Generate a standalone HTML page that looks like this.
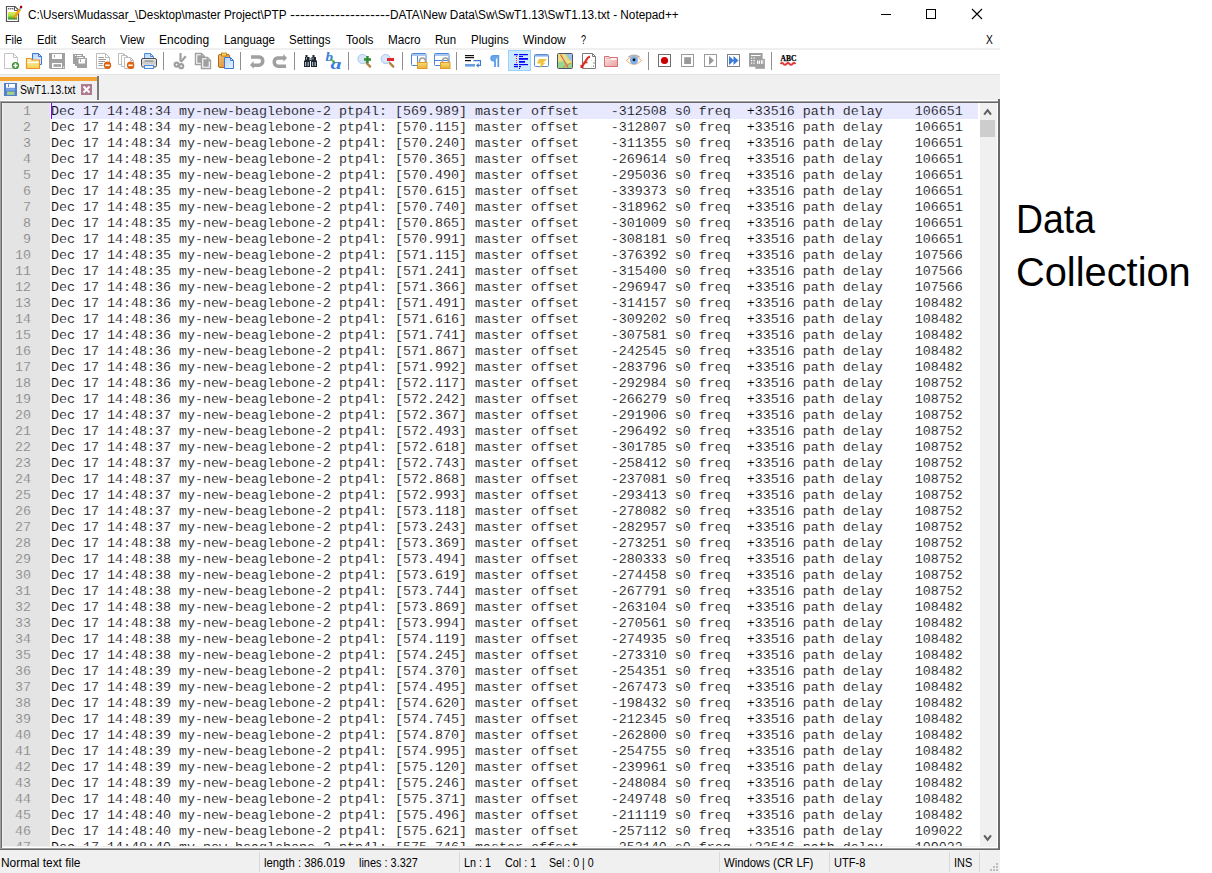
<!DOCTYPE html>
<html><head><meta charset="utf-8"><style>
html,body{margin:0;padding:0}
body{width:1212px;height:873px;position:relative;overflow:hidden;background:#fff;font-family:"Liberation Sans", sans-serif}
.t{position:absolute;white-space:pre;transform-origin:0 0}
.r{position:absolute}
#ed{position:absolute;left:3px;top:103px;width:977px;height:743px;overflow:hidden;background:#fff}
#margin{position:absolute;left:0;top:0;width:47px;height:743px;background:#e4e4e4}
#curline{position:absolute;left:49px;top:0;width:926px;height:16px;background:#e8e8ff}
#caret{position:absolute;left:48px;top:0;width:1px;height:16px;background:#8000ff}
#nums .nm{position:absolute;left:0;width:28px;text-align:right;font-family:"Liberation Mono", monospace;font-size:13.3333px;line-height:16px;color:#808080;white-space:pre;transform:scaleX(1.00000);transform-origin:28px 0;-webkit-text-stroke:0.18px #e4e4e4}
#txt .ln{position:absolute;left:48px;font-family:"Liberation Mono", monospace;font-size:13.3333px;line-height:16px;color:#000;white-space:pre;transform:scaleX(1.00000);transform-origin:0 0;-webkit-text-stroke:0.18px #fff}
</style></head>
<body>

<!-- menu / toolbar separators -->
<div class="r" style="left:0;top:48px;width:1000px;height:2px;background:#f0f0f0"></div>
<div class="r" style="left:0;top:74px;width:1000px;height:1px;background:#e3e3e3"></div>
<div class="r" style="left:0;top:75px;width:1000px;height:25px;background:#f0f0f0"></div>
<div class="r" style="left:0;top:77px;width:97px;height:4px;background:#f4a536"></div>
<div class="r" style="left:97px;top:76px;width:2px;height:24px;background:#7a7a7a"></div>
<!-- editor frame -->
<div class="r" style="left:0;top:100px;width:998px;height:1px;background:#fff"></div>
<div class="r" style="left:0;top:101px;width:998px;height:1px;background:#a0a0a0"></div>
<div class="r" style="left:0;top:102px;width:998px;height:1px;background:#696969"></div>
<div class="r" style="left:0;top:101px;width:1px;height:749px;background:#a0a0a0"></div>
<div class="r" style="left:1px;top:102px;width:1px;height:748px;background:#696969"></div>
<div class="r" style="left:2px;top:103px;width:996px;height:744px;background:#f0f0f0"></div>
<div class="r" style="left:2px;top:847px;width:996px;height:1px;background:#fff"></div>
<div class="r" style="left:0;top:848px;width:1000px;height:1px;background:#a0a0a0"></div>
<div class="r" style="left:0;top:849px;width:1000px;height:1px;background:#696969"></div>
<div class="r" style="left:997px;top:103px;width:1px;height:745px;background:#fff"></div>
<div class="r" style="left:998px;top:99px;width:2px;height:751px;background:#696969"></div>
<!-- scrollbar -->
<div class="r" style="left:980px;top:103px;width:17px;height:743px;background:#f0f0f0"></div>
<div class="r" style="left:980px;top:120px;width:15px;height:17px;background:#cdcdcd"></div>
<!-- status bar -->
<div class="r" style="left:0;top:850px;width:1000px;height:23px;background:#f0f0f0"></div>
<div class="r" style="left:259px;top:852px;width:1px;height:20px;background:#d9d9d9"></div><div class="r" style="left:459px;top:852px;width:1px;height:20px;background:#d9d9d9"></div><div class="r" style="left:719px;top:852px;width:1px;height:20px;background:#d9d9d9"></div><div class="r" style="left:829px;top:852px;width:1px;height:20px;background:#d9d9d9"></div><div class="r" style="left:949px;top:852px;width:1px;height:20px;background:#d9d9d9"></div><div class="r" style="left:979px;top:852px;width:1px;height:20px;background:#d9d9d9"></div><div class="r" style="left:978px;top:103px;width:2px;height:743px;background:#fff"></div>
<div id="ed">
  <div id="margin"></div>
  <div id="curline"></div>
  <div id="nums"><div class="nm" style="top:1px">1</div><div class="nm" style="top:17px">2</div><div class="nm" style="top:33px">3</div><div class="nm" style="top:49px">4</div><div class="nm" style="top:65px">5</div><div class="nm" style="top:81px">6</div><div class="nm" style="top:97px">7</div><div class="nm" style="top:113px">8</div><div class="nm" style="top:129px">9</div><div class="nm" style="top:145px">10</div><div class="nm" style="top:161px">11</div><div class="nm" style="top:177px">12</div><div class="nm" style="top:193px">13</div><div class="nm" style="top:209px">14</div><div class="nm" style="top:225px">15</div><div class="nm" style="top:241px">16</div><div class="nm" style="top:257px">17</div><div class="nm" style="top:273px">18</div><div class="nm" style="top:289px">19</div><div class="nm" style="top:305px">20</div><div class="nm" style="top:321px">21</div><div class="nm" style="top:337px">22</div><div class="nm" style="top:353px">23</div><div class="nm" style="top:369px">24</div><div class="nm" style="top:385px">25</div><div class="nm" style="top:401px">26</div><div class="nm" style="top:417px">27</div><div class="nm" style="top:433px">28</div><div class="nm" style="top:449px">29</div><div class="nm" style="top:465px">30</div><div class="nm" style="top:481px">31</div><div class="nm" style="top:497px">32</div><div class="nm" style="top:513px">33</div><div class="nm" style="top:529px">34</div><div class="nm" style="top:545px">35</div><div class="nm" style="top:561px">36</div><div class="nm" style="top:577px">37</div><div class="nm" style="top:593px">38</div><div class="nm" style="top:609px">39</div><div class="nm" style="top:625px">40</div><div class="nm" style="top:641px">41</div><div class="nm" style="top:657px">42</div><div class="nm" style="top:673px">43</div><div class="nm" style="top:689px">44</div><div class="nm" style="top:705px">45</div><div class="nm" style="top:721px">46</div><div class="nm" style="top:737px">47</div></div>
  <div id="txt"><div class="ln" style="top:1px;-webkit-text-stroke-color:#e8e8ff">Dec 17 14:48:34 my-new-beaglebone-2 ptp4l: [569.989] master offset    -312508 s0 freq  +33516 path delay    106651</div><div class="ln" style="top:17px">Dec 17 14:48:34 my-new-beaglebone-2 ptp4l: [570.115] master offset    -312807 s0 freq  +33516 path delay    106651</div><div class="ln" style="top:33px">Dec 17 14:48:34 my-new-beaglebone-2 ptp4l: [570.240] master offset    -311355 s0 freq  +33516 path delay    106651</div><div class="ln" style="top:49px">Dec 17 14:48:35 my-new-beaglebone-2 ptp4l: [570.365] master offset    -269614 s0 freq  +33516 path delay    106651</div><div class="ln" style="top:65px">Dec 17 14:48:35 my-new-beaglebone-2 ptp4l: [570.490] master offset    -295036 s0 freq  +33516 path delay    106651</div><div class="ln" style="top:81px">Dec 17 14:48:35 my-new-beaglebone-2 ptp4l: [570.615] master offset    -339373 s0 freq  +33516 path delay    106651</div><div class="ln" style="top:97px">Dec 17 14:48:35 my-new-beaglebone-2 ptp4l: [570.740] master offset    -318962 s0 freq  +33516 path delay    106651</div><div class="ln" style="top:113px">Dec 17 14:48:35 my-new-beaglebone-2 ptp4l: [570.865] master offset    -301009 s0 freq  +33516 path delay    106651</div><div class="ln" style="top:129px">Dec 17 14:48:35 my-new-beaglebone-2 ptp4l: [570.991] master offset    -308181 s0 freq  +33516 path delay    106651</div><div class="ln" style="top:145px">Dec 17 14:48:35 my-new-beaglebone-2 ptp4l: [571.115] master offset    -376392 s0 freq  +33516 path delay    107566</div><div class="ln" style="top:161px">Dec 17 14:48:35 my-new-beaglebone-2 ptp4l: [571.241] master offset    -315400 s0 freq  +33516 path delay    107566</div><div class="ln" style="top:177px">Dec 17 14:48:36 my-new-beaglebone-2 ptp4l: [571.366] master offset    -296947 s0 freq  +33516 path delay    107566</div><div class="ln" style="top:193px">Dec 17 14:48:36 my-new-beaglebone-2 ptp4l: [571.491] master offset    -314157 s0 freq  +33516 path delay    108482</div><div class="ln" style="top:209px">Dec 17 14:48:36 my-new-beaglebone-2 ptp4l: [571.616] master offset    -309202 s0 freq  +33516 path delay    108482</div><div class="ln" style="top:225px">Dec 17 14:48:36 my-new-beaglebone-2 ptp4l: [571.741] master offset    -307581 s0 freq  +33516 path delay    108482</div><div class="ln" style="top:241px">Dec 17 14:48:36 my-new-beaglebone-2 ptp4l: [571.867] master offset    -242545 s0 freq  +33516 path delay    108482</div><div class="ln" style="top:257px">Dec 17 14:48:36 my-new-beaglebone-2 ptp4l: [571.992] master offset    -283796 s0 freq  +33516 path delay    108482</div><div class="ln" style="top:273px">Dec 17 14:48:36 my-new-beaglebone-2 ptp4l: [572.117] master offset    -292984 s0 freq  +33516 path delay    108752</div><div class="ln" style="top:289px">Dec 17 14:48:36 my-new-beaglebone-2 ptp4l: [572.242] master offset    -266279 s0 freq  +33516 path delay    108752</div><div class="ln" style="top:305px">Dec 17 14:48:37 my-new-beaglebone-2 ptp4l: [572.367] master offset    -291906 s0 freq  +33516 path delay    108752</div><div class="ln" style="top:321px">Dec 17 14:48:37 my-new-beaglebone-2 ptp4l: [572.493] master offset    -296492 s0 freq  +33516 path delay    108752</div><div class="ln" style="top:337px">Dec 17 14:48:37 my-new-beaglebone-2 ptp4l: [572.618] master offset    -301785 s0 freq  +33516 path delay    108752</div><div class="ln" style="top:353px">Dec 17 14:48:37 my-new-beaglebone-2 ptp4l: [572.743] master offset    -258412 s0 freq  +33516 path delay    108752</div><div class="ln" style="top:369px">Dec 17 14:48:37 my-new-beaglebone-2 ptp4l: [572.868] master offset    -237081 s0 freq  +33516 path delay    108752</div><div class="ln" style="top:385px">Dec 17 14:48:37 my-new-beaglebone-2 ptp4l: [572.993] master offset    -293413 s0 freq  +33516 path delay    108752</div><div class="ln" style="top:401px">Dec 17 14:48:37 my-new-beaglebone-2 ptp4l: [573.118] master offset    -278082 s0 freq  +33516 path delay    108752</div><div class="ln" style="top:417px">Dec 17 14:48:37 my-new-beaglebone-2 ptp4l: [573.243] master offset    -282957 s0 freq  +33516 path delay    108752</div><div class="ln" style="top:433px">Dec 17 14:48:38 my-new-beaglebone-2 ptp4l: [573.369] master offset    -273251 s0 freq  +33516 path delay    108752</div><div class="ln" style="top:449px">Dec 17 14:48:38 my-new-beaglebone-2 ptp4l: [573.494] master offset    -280333 s0 freq  +33516 path delay    108752</div><div class="ln" style="top:465px">Dec 17 14:48:38 my-new-beaglebone-2 ptp4l: [573.619] master offset    -274458 s0 freq  +33516 path delay    108752</div><div class="ln" style="top:481px">Dec 17 14:48:38 my-new-beaglebone-2 ptp4l: [573.744] master offset    -267791 s0 freq  +33516 path delay    108752</div><div class="ln" style="top:497px">Dec 17 14:48:38 my-new-beaglebone-2 ptp4l: [573.869] master offset    -263104 s0 freq  +33516 path delay    108482</div><div class="ln" style="top:513px">Dec 17 14:48:38 my-new-beaglebone-2 ptp4l: [573.994] master offset    -270561 s0 freq  +33516 path delay    108482</div><div class="ln" style="top:529px">Dec 17 14:48:38 my-new-beaglebone-2 ptp4l: [574.119] master offset    -274935 s0 freq  +33516 path delay    108482</div><div class="ln" style="top:545px">Dec 17 14:48:38 my-new-beaglebone-2 ptp4l: [574.245] master offset    -273310 s0 freq  +33516 path delay    108482</div><div class="ln" style="top:561px">Dec 17 14:48:39 my-new-beaglebone-2 ptp4l: [574.370] master offset    -254351 s0 freq  +33516 path delay    108482</div><div class="ln" style="top:577px">Dec 17 14:48:39 my-new-beaglebone-2 ptp4l: [574.495] master offset    -267473 s0 freq  +33516 path delay    108482</div><div class="ln" style="top:593px">Dec 17 14:48:39 my-new-beaglebone-2 ptp4l: [574.620] master offset    -198432 s0 freq  +33516 path delay    108482</div><div class="ln" style="top:609px">Dec 17 14:48:39 my-new-beaglebone-2 ptp4l: [574.745] master offset    -212345 s0 freq  +33516 path delay    108482</div><div class="ln" style="top:625px">Dec 17 14:48:39 my-new-beaglebone-2 ptp4l: [574.870] master offset    -262800 s0 freq  +33516 path delay    108482</div><div class="ln" style="top:641px">Dec 17 14:48:39 my-new-beaglebone-2 ptp4l: [574.995] master offset    -254755 s0 freq  +33516 path delay    108482</div><div class="ln" style="top:657px">Dec 17 14:48:39 my-new-beaglebone-2 ptp4l: [575.120] master offset    -239961 s0 freq  +33516 path delay    108482</div><div class="ln" style="top:673px">Dec 17 14:48:39 my-new-beaglebone-2 ptp4l: [575.246] master offset    -248084 s0 freq  +33516 path delay    108482</div><div class="ln" style="top:689px">Dec 17 14:48:40 my-new-beaglebone-2 ptp4l: [575.371] master offset    -249748 s0 freq  +33516 path delay    108482</div><div class="ln" style="top:705px">Dec 17 14:48:40 my-new-beaglebone-2 ptp4l: [575.496] master offset    -211119 s0 freq  +33516 path delay    108482</div><div class="ln" style="top:721px">Dec 17 14:48:40 my-new-beaglebone-2 ptp4l: [575.621] master offset    -257112 s0 freq  +33516 path delay    109022</div><div class="ln" style="top:737px">Dec 17 14:48:40 my-new-beaglebone-2 ptp4l: [575.746] master offset    -252140 s0 freq  +33516 path delay    109022</div></div>
  <div id="caret"></div>
</div>
<svg class="r" style="left:0;top:0" width="1000" height="873" viewBox="0 0 1000 873"><defs><linearGradient id="gNP" x1="0" y1="0" x2="0" y2="1"><stop offset="0" stop-color="#e8e860"/><stop offset=".5" stop-color="#a8e040"/><stop offset="1" stop-color="#1f8a1f"/></linearGradient><linearGradient id="gFold" x1="0" y1="0" x2="0" y2="1"><stop offset="0" stop-color="#fff4c0"/><stop offset="1" stop-color="#f5d24a"/></linearGradient><linearGradient id="gClip" x1="0" y1="0" x2="1" y2="1"><stop offset="0" stop-color="#f2c27a"/><stop offset="1" stop-color="#d88a30"/></linearGradient><linearGradient id="gBlue" x1="0" y1="0" x2="1" y2="1"><stop offset="0" stop-color="#b8d4fa"/><stop offset="1" stop-color="#e8f2ff"/></linearGradient><linearGradient id="gLock" x1="0" y1="0" x2="0" y2="1"><stop offset="0" stop-color="#f8dc78"/><stop offset="1" stop-color="#e8b030"/></linearGradient><linearGradient id="gPrn" x1="0" y1="0" x2="0" y2="1"><stop offset="0" stop-color="#f4f4f4"/><stop offset=".5" stop-color="#c8c8c8"/><stop offset="1" stop-color="#f0f0f0"/></linearGradient><linearGradient id="gPink" x1="0" y1="0" x2="1" y2="1"><stop offset="0" stop-color="#fbe4e4"/><stop offset="1" stop-color="#e8a0a0"/></linearGradient></defs><path d="M6.5,6.5 H15 L18.5,10 V21.5 H6.5 Z" fill="#fff" stroke="#555" stroke-width="1.2"/><path d="M14.5,6.5 V10.5 H18.5" fill="none" stroke="#555" stroke-width="1"/><g fill="#666"><rect x="8" y="8" width="1.4" height="1.4"/><rect x="10" y="8" width="1.4" height="1.4"/><rect x="12" y="8" width="1.4" height="1.4"/></g><rect x="8" y="12" width="9" height="7.5" fill="url(#gNP)"/><path d="M14,18.5 L20,9" stroke="#f0a010" stroke-width="2.6" stroke-linecap="butt"/><path d="M20,9 L21,7.5" stroke="#8ab0e0" stroke-width="2.4"/><rect x="20" y="5.8" width="2.2" height="2.2" fill="#a00000"/><path d="M13.6,19.2 L14.4,17.6 L15.4,18.3 Z" fill="#333"/><rect x="881" y="14" width="10" height="1" fill="#000"/><rect x="926.5" y="9.5" width="9" height="9" fill="none" stroke="#000" stroke-width="1"/><path d="M972,9 L982,19 M982,9 L972,19" stroke="#000" stroke-width="1.1"/><path d="M4.5,53.5 H13.5 L17.5,57.5 V68.5 H4.5 Z" fill="#fff" stroke="#c4c4c4" stroke-width="1"/><path d="M13.5,53.5 V57.5 H17.5" fill="none" stroke="#c4c4c4" stroke-width="1"/><circle cx="15.5" cy="65.5" r="3.6" fill="#3d8f2e"/><path d="M15.5,63.3 V67.7 M13.3,65.5 H17.7" stroke="#fff" stroke-width="1.6"/><path d="M32.5,53.5 H38.5 L41.5,56.5 V64.5 H32.5 Z" fill="url(#gBlue)" stroke="#3b78d8" stroke-width="1"/><path d="M38.5,53.5 V56.5 H41.5" fill="none" stroke="#3b78d8" stroke-width="1"/><path d="M26.5,58.5 H31 L32,60 H39.5 V68.5 H26.5 Z" fill="url(#gFold)" stroke="#e8902a" stroke-width="1.2"/><path d="M27,62.5 H39" stroke="#fff" stroke-width="1"/><path d="M49,53 H65 V69 H50 L49,68 Z" fill="#a0a0a0"/><rect x="52" y="54" width="10" height="5" fill="#fff"/><rect x="54" y="55" width="1" height="2.5" fill="#a0a0a0"/><rect x="52" y="63" width="10" height="5" fill="#fff"/><rect x="53.5" y="64.2" width="7.5" height="2.6" fill="#a0a0a0"/><rect x="63" y="66.6" width="1.2" height="1.2" fill="#fff"/><rect x="73" y="54" width="10" height="10" fill="#a0a0a0"/><rect x="75" y="55" width="1.3" height="1.3" fill="#fff"/><rect x="77" y="55" width="4.5" height="1.3" fill="#fff"/><rect x="75" y="56" width="10" height="10" fill="#a0a0a0"/><rect x="77" y="57" width="1.3" height="1.3" fill="#fff"/><rect x="79" y="57" width="4.5" height="1.3" fill="#fff"/><rect x="77" y="58" width="10" height="10" fill="#a0a0a0"/><rect x="79" y="59" width="1.3" height="1.3" fill="#fff"/><rect x="81" y="59" width="4.5" height="1.3" fill="#fff"/><rect x="78.5" y="59.5" width="6.5" height="4" fill="#fff"/><rect x="80" y="59.5" width="1" height="2.5" fill="#a0a0a0"/><path d="M96.5,53.5 H105.5 L109.5,57.5 V68.5 H96.5 Z" fill="#fff" stroke="#bdbdbd" stroke-width="1"/><path d="M105.5,53.5 V57.5 H109.5" fill="none" stroke="#bdbdbd" stroke-width="1"/><g stroke="#9a9a9a" stroke-width="1"><path d="M98.5,57.5 H104"/><path d="M98.5,59.5 H106"/><path d="M98.5,61.5 H105"/><path d="M98.5,63.5 H103"/><path d="M98.5,65.5 H103"/></g><circle cx="107.5" cy="65.3" r="3.7" fill="#e0600a"/><path d="M105.3,65.3 H109.7" stroke="#fff" stroke-width="1.6"/><path d="M118.5,53.5 H123.5 L126.5,56.5 V64.5 H118.5 Z" fill="#fff" stroke="#bdbdbd" stroke-width="1"/><path d="M123.5,53.5 V56.5 H126.5" fill="none" stroke="#bdbdbd" stroke-width="1"/><path d="M121.5,55.5 H126.5 L129.5,58.5 V66.5 H121.5 Z" fill="#fff" stroke="#bdbdbd" stroke-width="1"/><path d="M126.5,55.5 V58.5 H129.5" fill="none" stroke="#bdbdbd" stroke-width="1"/><path d="M124.5,57.5 H130.5 L133.5,60.5 V68.5 H124.5 Z" fill="#fff" stroke="#bdbdbd" stroke-width="1"/><path d="M130.5,57.5 V60.5 H133.5" fill="none" stroke="#bdbdbd" stroke-width="1"/><circle cx="130.6" cy="65.3" r="3.7" fill="#e0600a"/><path d="M128.4,65.3 H132.8" stroke="#fff" stroke-width="1.6"/><path d="M144.5,53.5 H150.5 L153.5,56.5 V61.5 H144.5 Z" fill="url(#gBlue)" stroke="#4a8de0" stroke-width="1"/><path d="M150.5,53.5 V56.5 H153.5" fill="none" stroke="#4a8de0" stroke-width="1"/><rect x="141.5" y="58.5" width="15" height="8.5" rx="1.5" fill="url(#gPrn)" stroke="#4a4a4a" stroke-width="1"/><rect x="144.5" y="60.5" width="9" height="1" fill="#777"/><rect x="144.5" y="65.5" width="9" height="3" fill="#eaf4ff" stroke="#4a8de0" stroke-width="1"/><rect x="163" y="52" width="1" height="18" fill="#8f8f8f"/><rect x="240" y="52" width="1" height="18" fill="#8f8f8f"/><rect x="294" y="52" width="1" height="18" fill="#8f8f8f"/><rect x="348" y="52" width="1" height="18" fill="#8f8f8f"/><rect x="402" y="52" width="1" height="18" fill="#8f8f8f"/><rect x="456" y="52" width="1" height="18" fill="#8f8f8f"/><rect x="648" y="52" width="1" height="18" fill="#8f8f8f"/><rect x="771" y="52" width="1" height="18" fill="#8f8f8f"/><g fill="none" stroke="#a0a0a0"><path d="M180.5,53 V61.5" stroke-width="2.2"/><path d="M185.8,56.2 L180.8,62" stroke-width="2.2"/><circle cx="176.6" cy="64.6" r="2" stroke-width="2.2"/><circle cx="181.2" cy="66.2" r="2" stroke-width="2.2"/></g><path d="M195.5,53.5 H201.5 L204.5,56.5 V64.5 H195.5 Z" fill="#fff" stroke="#a0a0a0" stroke-width="1.4"/><path d="M201.5,53.5 V56.5 H204.5" fill="none" stroke="#a0a0a0" stroke-width="1.4"/><path d="M197.3,55.3 H201 L202.7,57 V62.8 H197.3 Z" fill="#a0a0a0"/><path d="M201.5,57.5 H207.5 L210.5,60.5 V68.5 H201.5 Z" fill="#fff" stroke="#a0a0a0" stroke-width="1.4"/><path d="M207.5,57.5 V60.5 H210.5" fill="none" stroke="#a0a0a0" stroke-width="1.4"/><path d="M203.3,59.3 H207 L208.7,61 V66.8 H203.3 Z" fill="#a0a0a0"/><rect x="218.5" y="54.5" width="11" height="13" rx="1.5" fill="url(#gClip)" stroke="#b0680e" stroke-width="1"/><rect x="221.5" y="53" width="5" height="3" fill="#f8d860" stroke="#c07010" stroke-width=".8"/><path d="M224.5,57.5 H230.5 L233.5,60.5 V68.5 H224.5 Z" fill="url(#gBlue)" stroke="#3b78d8" stroke-width="1"/><path d="M230.5,57.5 V60.5 H233.5" fill="none" stroke="#3b78d8" stroke-width="1"/><path d="M251,57 H259.5 A4.2,4.2 0 0 1 259.5,65.2 H253" fill="none" stroke="#a0a0a0" stroke-width="3.4"/><path d="M250,64.9 L253.6,61 V68.8 Z" fill="#a0a0a0"/><path d="M284,58 H277.5 A4.2,4.2 0 0 0 277.5,66.2 H286" fill="none" stroke="#a0a0a0" stroke-width="3.4"/><path d="M287,57.9 L283.4,54 V61.8 Z" fill="#a0a0a0"/><g fill="#1e252c"><rect x="304" y="60.5" width="6" height="6.5"/><rect x="311" y="60.5" width="6" height="6.5"/><rect x="305" y="57" width="4.5" height="4"/><rect x="311.5" y="57" width="4.5" height="4"/><rect x="309.5" y="58.5" width="2" height="2.5"/><rect x="305.5" y="55" width="2" height="2.5"/><rect x="312.5" y="55" width="2" height="2.5"/></g><g fill="#a8b8cc"><rect x="305" y="62" width="1.2" height="4"/><rect x="307.6" y="62" width="1.2" height="4"/><rect x="312" y="62" width="1.2" height="4"/><rect x="314.6" y="62" width="1.2" height="4"/><rect x="306" y="57.5" width="1" height="2"/><rect x="312.5" y="57.5" width="1" height="2"/><rect x="309.5" y="59" width="2" height="1"/></g><text x="325.5" y="61" font-family="Liberation Serif" font-style="italic" font-weight="bold" font-size="11.5" fill="#3a7ee0" textLength="7.5" lengthAdjust="spacingAndGlyphs">b</text><text x="330.5" y="68.6" font-family="Liberation Serif" font-style="italic" font-weight="bold" font-size="14" fill="#3a7ee0" textLength="11" lengthAdjust="spacingAndGlyphs">a</text><path d="M330.5,58.8 L333.8,61.8" stroke="#38a040" stroke-width="1.5"/><path d="M335.2,63.2 L332,62.6 L334.4,60.2 Z" fill="#38a040"/><path d="M366.7,63.2 L370.1,66.6" stroke="#b5813f" stroke-width="2.4" stroke-linecap="round"/><circle cx="362.5" cy="59" r="4.6" fill="#d8e6fa" stroke="#a8c6ee" stroke-width="1"/><path d="M367.5,56 V63 M364.0,59.5 H371.0" stroke="#2f8a2f" stroke-width="2.4"/><path d="M389.9,63.2 L393.3,66.6" stroke="#b5813f" stroke-width="2.4" stroke-linecap="round"/><circle cx="385.7" cy="59" r="4.6" fill="#d8e6fa" stroke="#a8c6ee" stroke-width="1"/><rect x="387.0" y="58" width="7" height="3" fill="#e8202a"/><rect x="411.5" y="53.5" width="14.5" height="12" rx="1" fill="#fff" stroke="#4a86d8" stroke-width="1"/><rect x="412" y="54" width="14" height="2" fill="#a8c8f0"/><rect x="417" y="56" width="1" height="9.5" fill="#4a86d8"/><path d="M419.5,62.5 V61 A3,3 0 0 1 425.5,61 V62.5" fill="none" stroke="#a0a0a0" stroke-width="1.6"/><rect x="417.5" y="62.5" width="9.5" height="6" fill="url(#gLock)" stroke="#e09a28" stroke-width="1"/><rect x="434.5" y="53.5" width="14.5" height="12" rx="1" fill="#fff" stroke="#4a86d8" stroke-width="1"/><rect x="435" y="54" width="14" height="2" fill="#a8c8f0"/><rect x="435" y="60" width="14" height="1" fill="#4a86d8"/><path d="M442.5,62.5 V61 A3,3 0 0 1 448.5,61 V62.5" fill="none" stroke="#a0a0a0" stroke-width="1.6"/><rect x="440.5" y="62.5" width="9.5" height="6" fill="url(#gLock)" stroke="#e09a28" stroke-width="1"/><g fill="#111"><rect x="465" y="55" width="9" height="1.2"/><rect x="465" y="57" width="9" height="1.2"/><rect x="465" y="60" width="6" height="1.2"/></g><rect x="465" y="64" width="10" height="2.6" fill="#6a9ee0"/><path d="M473.5,60.6 H480.5 V65.4 H477.5" fill="none" stroke="#3f78cf" stroke-width="1.1"/><path d="M476,65.4 L478.5,63 V67.8 Z" fill="#3f78cf"/><path d="M495,55 V67 M498.3,55 V67" stroke="#5a9ae8" stroke-width="1.8"/><path d="M499,55.6 H493.5 A2.6,2.6 0 0 0 493.5,60.8 H495" fill="#6aa8ec" stroke="#5a9ae8" stroke-width="1.2"/><rect x="508.5" y="50.5" width="22" height="20" fill="#cce8ff" stroke="#99d1ff" stroke-width="1"/><g fill="#0000ff"><rect x="514" y="54" width="4" height="1.2" rx=".5"/><rect x="519" y="54" width="9" height="1.2" rx=".5"/><rect x="519" y="56" width="4" height="1.1"/><rect x="519" y="58" width="9" height="1.8"/><rect x="519" y="61" width="6" height="1.8"/><rect x="514" y="64" width="4" height="1.2"/><rect x="519" y="64" width="9" height="1.2"/><rect x="514" y="66" width="4" height="1.2"/><rect x="519" y="66" width="2" height="1.2"/><rect x="519" y="68" width="1" height="1"/></g><g fill="#ff0000"><circle cx="516.5" cy="56.5" r=".6"/><circle cx="516.5" cy="58.5" r=".6"/><circle cx="516.5" cy="60.5" r=".6"/><circle cx="516.5" cy="62.5" r=".6"/></g><rect x="534.5" y="54.5" width="14" height="12" rx="1" fill="#fff" stroke="#5a8ad0" stroke-width="1"/><rect x="535" y="55" width="13" height="1.6" fill="#8ab4e8"/><path d="M539,59 H547 L543,63 H545.5 L539,68.5 L541,63.5 H537 Z" fill="#f0c53a"/><rect x="557.5" y="53.5" width="15" height="15" rx="1" fill="#e4e08a" stroke="#505068" stroke-width="1"/><path d="M565,54 H572 V61 L568,60 Z" fill="#9cc0ec"/><path d="M558,62 L564,61 L568,64 L572,63 V68 H558 Z" fill="#96d890"/><path d="M560.5,54.5 L568,67.5" stroke="#ee5a40" stroke-width="1.2"/><path d="M571.5,62.5 L563,67.5" stroke="#f07a30" stroke-width="1"/><path d="M565,54 L571,63" stroke="#f0e040" stroke-width="1"/><path d="M582.5,53.5 H592.5 L595.5,56.5 V68.5 H582.5 Z" fill="#fff" stroke="#7a7a7a" stroke-width="1"/><path d="M592.5,53.5 V56.5 H595.5" fill="none" stroke="#7a7a7a" stroke-width="1"/><g fill="#cfe8cf"><rect x="591" y="60" width="1" height="1"/><rect x="591" y="66" width="1" height="1"/><rect x="594" y="60" width="1" height="1"/></g><rect x="593.5" y="62" width="1" height="2" fill="#909090"/><rect x="593" y="65.5" width="1" height="1.5" fill="#909090"/><path d="M581,66.5 C583,66 584.5,63 586,60.5 C587,58.5 588,57 590,56.5" fill="none" stroke="#e02a2a" stroke-width="2.2"/><path d="M583.5,62.5 H587.5" stroke="#e02a2a" stroke-width="1.6"/><rect x="580.5" y="65" width="3" height="3" fill="#e02020"/><path d="M604.5,56.5 H609 L609.5,57.5 H617.5 V66.5 H604.5 Z" fill="url(#gPink)" stroke="#d87070" stroke-width="1"/><rect x="605.5" y="58" width="11" height="2" fill="#fff" opacity=".8"/><rect x="606" y="58.3" width="5" height="1" fill="#eaa0a0"/><path d="M626.3,60.5 Q634,52.5 641.7,60.5 Q634,68.5 626.3,60.5 Z" fill="#fffef6" stroke="#e8a868" stroke-width=".9"/><path d="M628.5,57 Q634,53.6 639.5,57" fill="none" stroke="#b0b0b0" stroke-width="1.5"/><circle cx="634" cy="60.2" r="4" fill="#7eaee8"/><circle cx="634" cy="59.8" r="1.4" fill="#000"/><rect x="658.5" y="54.5" width="12" height="12" fill="#fff" stroke="#707070" stroke-width="1"/><circle cx="664.5" cy="60.5" r="3.6" fill="#cc0000"/><rect x="681.5" y="54.5" width="12" height="12" fill="#fff" stroke="#9a9a9a" stroke-width="1"/><rect x="684.2" y="57.2" width="6.8" height="6.8" fill="#9a9a9a"/><rect x="704.5" y="54.5" width="12" height="12" fill="#fff" stroke="#9a9a9a" stroke-width="1"/><path d="M709,56 L714,60.5 L709,65 Z" fill="#9a9a9a"/><rect x="727.5" y="54.5" width="12" height="12" fill="#fff" stroke="#808080" stroke-width="1"/><path d="M729,56 L734,60.5 L729,65 Z M733.5,56 L738.5,60.5 L733.5,65 Z" fill="#3a7ad8"/><rect x="749" y="53" width="13.6" height="13.8" fill="#a0a0a0"/><rect x="755.3" y="58.9" width="9.6" height="9.9" fill="#a0a0a0"/><g fill="#fff"><rect x="751" y="55" width="9.5" height="1"/><rect x="751" y="57.5" width="1.2" height="1.2"/><rect x="753.5" y="57.5" width="1.5" height="1"/><rect x="751" y="60" width="1.2" height="1.2"/><rect x="751" y="62.5" width="1.2" height="1.2"/><rect x="753.5" y="60" width="1.2" height="1.2"/><rect x="753.5" y="62.5" width="1.2" height="1.2"/><rect x="757" y="60.5" width="1.2" height="3"/><rect x="757" y="62.5" width="3" height="1"/><rect x="759" y="60.5" width="1.1" height="3"/><rect x="761" y="60.5" width="2.5" height="1"/><rect x="761" y="60.5" width="1" height="3"/><rect x="761" y="62.5" width="2.5" height="1"/></g><text x="780.5" y="60.8" font-family="Liberation Serif" font-weight="bold" font-size="8.6" fill="#000" stroke="#000" stroke-width=".25" textLength="16" lengthAdjust="spacingAndGlyphs">ABC</text><path d="M780.5,63.8 Q782,62 783.5,63.8 T786.5,63.8 T789.5,63.8 T792.5,63.8 T795.5,63.8" fill="none" stroke="#e03838" stroke-width="2"/><rect x="4" y="83" width="13" height="13" fill="#4f80cc"/><rect x="6" y="84" width="9" height="3.8" fill="#fff"/><rect x="8" y="84.3" width="1" height="2.6" fill="#4f80cc"/><rect x="6" y="88.2" width="9" height="2.4" fill="#7aa6e8"/><rect x="7" y="91.6" width="7.5" height="3.3" fill="#a6d08a"/><rect x="81" y="84" width="11" height="11" fill="#b07a90"/><path d="M83.5,86.5 L89.5,92.5 M89.5,86.5 L83.5,92.5" stroke="#fff" stroke-width="2"/><path d="M984.2,114.6 L987.6,110.2 L991,114.6" fill="none" stroke="#606060" stroke-width="2.1"/><path d="M984.2,835.4 L987.6,839.8 L991,835.4" fill="none" stroke="#606060" stroke-width="2.1"/><g fill="#bdbdbd"><rect x="996" y="863" width="2" height="2"/><rect x="993" y="866" width="2" height="2"/><rect x="996" y="866" width="2" height="2"/><rect x="990" y="869" width="2" height="2"/><rect x="993" y="869" width="2" height="2"/><rect x="996" y="869" width="2" height="2"/></g></svg><div class="t" style="left:27.50px;top:6px;font-size:12px;line-height:18px;color:#000;transform:scaleX(0.9793)">C:\Users\Mudassar_\Desktop\master Project\PTP</div>
<div class="t" style="left:290.40px;top:6px;font-size:12px;line-height:18px;color:#000;transform:scaleX(1.2499)">--------------------</div>
<div class="t" style="left:390.00px;top:6px;font-size:12px;line-height:18px;color:#000;transform:scaleX(0.9831)">DATA\New Data\Sw\SwT1.13\SwT1.13.txt - Notepad++</div>
<div class="t" style="left:5.40px;top:31px;font-size:12px;line-height:18px;color:#000;transform:scaleX(0.8951)">File</div>
<div class="t" style="left:37.10px;top:31px;font-size:12px;line-height:18px;color:#000;transform:scaleX(0.9324)">Edit</div>
<div class="t" style="left:71.30px;top:31px;font-size:12px;line-height:18px;color:#000;transform:scaleX(0.9077)">Search</div>
<div class="t" style="left:120.00px;top:31px;font-size:12px;line-height:18px;color:#000;transform:scaleX(0.9492)">View</div>
<div class="t" style="left:159.20px;top:31px;font-size:12px;line-height:18px;color:#000;transform:scaleX(1.0027)">Encoding</div>
<div class="t" style="left:223.50px;top:31px;font-size:12px;line-height:18px;color:#000;transform:scaleX(0.9550)">Language</div>
<div class="t" style="left:289.20px;top:31px;font-size:12px;line-height:18px;color:#000;transform:scaleX(0.9571)">Settings</div>
<div class="t" style="left:345.50px;top:31px;font-size:12px;line-height:18px;color:#000;transform:scaleX(0.9781)">Tools</div>
<div class="t" style="left:387.50px;top:31px;font-size:12px;line-height:18px;color:#000;transform:scaleX(0.9772)">Macro</div>
<div class="t" style="left:435.20px;top:31px;font-size:12px;line-height:18px;color:#000;transform:scaleX(0.9560)">Run</div>
<div class="t" style="left:470.60px;top:31px;font-size:12px;line-height:18px;color:#000;transform:scaleX(0.9604)">Plugins</div>
<div class="t" style="left:523.40px;top:31px;font-size:12px;line-height:18px;color:#000;transform:scaleX(1.0020)">Window</div>
<div class="t" style="left:581.00px;top:31px;font-size:12px;line-height:18px;color:#000;transform:scaleX(0.7571)">?</div>
<div class="t" style="left:986.20px;top:31px;font-size:12px;line-height:18px;color:#000;transform:scaleX(0.8500)">X</div>
<div class="t" style="left:20.30px;top:81px;font-size:12px;line-height:18px;color:#000;transform:scaleX(0.8731)">SwT1.13.txt</div>
<div class="t" style="left:0.60px;top:854px;font-size:12px;line-height:18px;color:#000;transform:scaleX(0.9932)">Normal text file</div>
<div class="t" style="left:264.30px;top:854px;font-size:12px;line-height:18px;color:#000;transform:scaleX(0.9410)">length : 386.019</div>
<div class="t" style="left:358.60px;top:854px;font-size:12px;line-height:18px;color:#000;transform:scaleX(0.9102)">lines : 3.327</div>
<div class="t" style="left:464.00px;top:854px;font-size:12px;line-height:18px;color:#000;transform:scaleX(0.8995)">Ln : 1</div>
<div class="t" style="left:504.70px;top:854px;font-size:12px;line-height:18px;color:#000;transform:scaleX(0.8998)">Col : 1</div>
<div class="t" style="left:549.00px;top:854px;font-size:12px;line-height:18px;color:#000;transform:scaleX(0.8857)">Sel : 0 | 0</div>
<div class="t" style="left:724.00px;top:854px;font-size:12px;line-height:18px;color:#000;transform:scaleX(0.9442)">Windows (CR LF)</div>
<div class="t" style="left:834.20px;top:854px;font-size:12px;line-height:18px;color:#000;transform:scaleX(0.9207)">UTF-8</div>
<div class="t" style="left:953.59px;top:854px;font-size:12px;line-height:18px;color:#000;transform:scaleX(0.9105)">INS</div>
<div class="t" style="left:1015.60px;top:189px;font-size:40px;line-height:60px;color:#000;transform:scaleX(0.9350)">Data</div>
<div class="t" style="left:1015.51px;top:242px;font-size:40px;line-height:60px;color:#000;transform:scaleX(0.9948)">Collection</div>
</body></html>
